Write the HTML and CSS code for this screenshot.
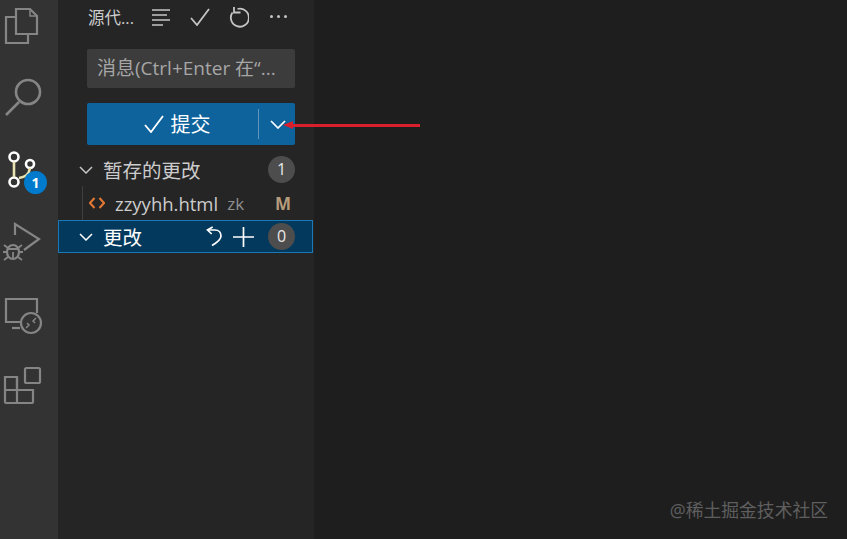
FILE: index.html
```html
<!DOCTYPE html>
<html lang="zh-CN">

<head>
    <meta charset="UTF-8">
    <title>源代码管理</title>
    <link rel="stylesheet" href="styles.css">
</head>

<body>
    <nav class="activity-bar">
        <div class="activity-item">
            <svg width="58" height="72" viewBox="0 0 58 72" fill="none" stroke="#858585" stroke-width="2.2">
                <path d="M16 19h14l7 7v18H16z" />
                <path d="M30 19v7h7" stroke-width="1.5" />
                <path d="M16 27H6v26h22v-9" />
            </svg>
        </div>
        <div class="activity-item">
            <svg width="58" height="72" viewBox="0 0 58 72" fill="none" stroke="#858585" stroke-width="2.6">
                <circle cx="28" cy="30" r="12" />
                <path d="M19 40L6 53" />
            </svg>
        </div>
        <div class="activity-item">
            <svg width="58" height="72" viewBox="0 0 58 72" fill="none" stroke="#fff" stroke-width="2.6">
                <circle cx="14" cy="23" r="4.500" />
                <circle cx="14" cy="48" r="4.500" />
                <circle cx="30" cy="30" r="4" />
                <path d="M14 28v15" stroke="#e8e3b0" />
                <path d="M19 44c6-1 10-3 11-10" stroke="#e8e3b0" />
            </svg>
            <span class="badge">1</span>
        </div>
        <div class="activity-item">
            <svg width="58" height="72" viewBox="0 0 58 72" fill="none" stroke="#858585" stroke-width="2.2">
                <path d="M15 29V18l24 15-15 11" />
                <ellipse cx="13" cy="46" rx="6" ry="7" />
                <path d="M8 43h10M13 46v7M4 39l4 3M22 39l-4 3M3 46h4M23 46h-4M4 54l4-3M22 54l-4-3" stroke-width="1.8" />
            </svg>
        </div>
        <div class="activity-item">
            <svg width="58" height="72" viewBox="0 0 58 72" fill="none" stroke="#858585" stroke-width="2.2">
                <path d="M21 44H6V21h31v14" />
                <path d="M12 50h8" />
                <circle cx="31" cy="45" r="10" />
                <path d="M26 50l3-3-2-2M36 40l-3 3 2 2" stroke-width="1.500" />
            </svg>
        </div>
        <div class="activity-item">
            <svg width="58" height="72" viewBox="0 0 58 72" fill="none" stroke="#858585" stroke-width="2.2">
                <rect x="25" y="18" width="15" height="15" rx="1.500" />
                <path d="M5 27h12v26H6a1 1 0 0 1-1-1z" />
                <path d="M5 40h28v12a1 1 0 0 1-1 1H17" />
                <path d="M17 27v13" />
            </svg>
        </div>
    </nav>

    <aside class="sidebar">
        <div class="sidebar-header">
            <span class="sidebar-title">源代...</span>
            <svg width="20" height="18" viewBox="0 0 20 18" fill="none" stroke="#c5c5c5" stroke-width="1.6">
                <path d="M1 2h18M1 7h15M1 12h18M1 17h11" />
            </svg>
            <svg width="20" height="18" viewBox="0 0 20 18" fill="none" stroke="#c5c5c5" stroke-width="1.8">
                <path d="M1 10l6 7L19 1" />
            </svg>
            <svg width="20" height="22" viewBox="0 0 20 22" fill="none" stroke="#c5c5c5" stroke-width="1.8">
                <path d="M8.500 3a9 9 0 1 1-5 3.500" />
                <path d="M5 1v5.500h6.500" />
            </svg>
            <span class="dots"><i></i><i></i><i></i></span>
        </div>

        <div class="commit-box">
            <div class="message-input">消息(Ctrl+Enter 在“...</div>
            <div class="commit-button">
                <div class="commit-main">
                    <svg width="20" height="18" viewBox="0 0 20 18" fill="none" stroke="#fff" stroke-width="1.8">
                        <path d="M1 10l6 7L19 1" />
                    </svg>
                    <span class="commit-label">提交</span>
                </div>
                <div class="commit-more">
                    <svg width="16" height="9" viewBox="0 0 16 9" fill="none" stroke="#fff" stroke-width="1.7">
                        <path d="M1 1l7 7 7-7" />
                    </svg>
                </div>
            </div>
        </div>

        <div class="tree-row group-row">
            <svg width="14" height="8" viewBox="0 0 14 8" fill="none" stroke="#c5c5c5" stroke-width="1.5">
                <path d="M1 1l6 6 6-6" />
            </svg>
            <span class="row-label">暂存的更改</span>
            <span class="count">1</span>
        </div>
        <div class="tree-row file-row">
            <svg width="16" height="12" viewBox="0 0 16 12" fill="none" stroke="#e37933" stroke-width="2">
                <path d="M5.500 1L1 6l4.500 5M10.500 1L15 6l-4.500 5" />
            </svg>
            <span class="file-name">zzyyhh.html</span>
            <span class="file-dir">zk</span>
            <span class="file-status">M</span>
        </div>
        <div class="tree-row group-row selected">
            <svg width="14" height="8" viewBox="0 0 14 8" fill="none" stroke="#fff" stroke-width="1.5">
                <path d="M1 1l6 6 6-6" />
            </svg>
            <span class="row-label">更改</span>
            <svg class="undo-icon" width="16" height="21" viewBox="0 0 16 21" fill="none" stroke="#fff" stroke-width="1.7">
                <path d="M6.700 1L1.500 4l4.200 4" />
                <path d="M1.500 4H9c4 0 6 3 6 6 0 3-3 6-9 9.500" />
            </svg>
            <svg class="plus-icon" width="21" height="20" viewBox="0 0 21 20" fill="none" stroke="#fff" stroke-width="1.7">
                <path d="M10.500 0v20M0 10h21" />
            </svg>
            <span class="count">0</span>
        </div>
    </aside>

    <main class="editor">
        <div class="arrow"></div>
        <div class="watermark">@稀土掘金技术社区</div>
    </main>
</body>

</html>
```

FILE: styles.css
```css
html,
body {
    height: 100%;
}

body {
    display: flex;
    margin: 0;
    overflow: hidden;
    background-color: #1e1e1e;
    font-family: "Open Sans", "Noto Sans CJK SC", sans-serif;
    color: #cccccc;
}

.activity-bar {
    width: 58px;
    flex-shrink: 0;
    background-color: #333333;
}

.activity-item {
    position: relative;
    height: 72px;
}

.activity-item:first-child {
    margin-top: -10px;
}

.activity-item svg {
    display: block;
}

.badge {
    position: absolute;
    left: 24px;
    top: 37px;
    width: 23px;
    height: 23px;
    border-radius: 50%;
    background-color: #007acc;
    color: white;
    font-size: 14px;
    font-weight: 700;
    line-height: 23px;
    text-align: center;
}

.sidebar {
    width: 256px;
    flex-shrink: 0;
    background-color: #252526;
}

.sidebar-header {
    display: flex;
    align-items: center;
    gap: 19px;
    height: 33px;
    padding-left: 30px;
}

.sidebar-title {
    width: 46px;
    margin-right: -2px;
    font-size: 16.5px;
    white-space: nowrap;
}

.dots {
    display: flex;
    gap: 4px;
    margin-left: 2px;
}

.dots i {
    width: 3px;
    height: 3px;
    border-radius: 50%;
    background-color: #c5c5c5;
}

.commit-box {
    padding: 16px 19px 8px 29px;
}

.message-input {
    height: 39px;
    margin-bottom: 15px;
    padding-left: 10px;
    border-radius: 2px;
    background-color: #3c3c3c;
    color: #a6a6a6;
    font-size: 19px;
    line-height: 39px;
    white-space: nowrap;
}

.commit-button {
    display: flex;
    height: 42px;
    border-radius: 2px;
    background-color: #0e639c;
    color: white;
}

.commit-main {
    display: flex;
    flex: 1;
    align-items: center;
    justify-content: center;
    gap: 7px;
    padding-left: 9px;
    font-size: 20px;
}

.commit-label {
    margin-top: -2px;
}

.commit-more {
    position: relative;
    display: flex;
    align-items: center;
    justify-content: center;
    box-sizing: border-box;
    width: 37px;
    padding-left: 3px;
}

.commit-more::before {
    content: "";
    position: absolute;
    left: 0;
    top: 6px;
    bottom: 6px;
    width: 1px;
    background-color: #5f97bd;
}

.tree-row {
    display: flex;
    align-items: center;
    box-sizing: border-box;
    padding-right: 19px;
}

.group-row {
    height: 33px;
    padding-left: 21px;
}

.row-label {
    flex: 1;
    margin-left: 10px;
    font-size: 19.5px;
}

.count {
    width: 27px;
    height: 27px;
    border-radius: 50%;
    background-color: #4d4d4d;
    color: #e8e8e8;
    font-size: 16px;
    line-height: 27px;
    text-align: center;
}

.file-row {
    position: relative;
    height: 34px;
    padding-left: 31px;
}

.file-row::before {
    content: "";
    position: absolute;
    left: 24px;
    top: 0;
    bottom: 0;
    width: 1px;
    background-color: #3f3f3f;
}

.file-name {
    margin-left: 10px;
    font-size: 18.5px;
}

.file-dir {
    flex: 1;
    margin-left: 9px;
    color: #8f8f8f;
    font-size: 17px;
}

.file-status {
    margin-right: 4px;
    color: #b69b7b;
    font-size: 17px;
    font-weight: 700;
}

.selected {
    width: 255px;
    border: 1px solid #1a78b5;
    background-color: #04395e;
    color: white;
    padding-right: 17px;
    padding-left: 20px;
}

.undo-icon {
    margin-right: 11px;
}

.plus-icon {
    margin-right: 14px;
}

.editor {
    position: relative;
    flex: 1;
}

.arrow {
    position: absolute;
    left: -21px;
    top: 124px;
    width: 127px;
    height: 3px;
    background-color: #d81f2b;
}

.arrow::before {
    content: "";
    position: absolute;
    left: -10px;
    top: -3px;
    border-top: 4.5px solid transparent;
    border-bottom: 4.5px solid transparent;
    border-right: 10px solid #d81f2b;
}

.watermark {
    position: absolute;
    right: 19px;
    bottom: 17px;
    color: #5f5f5f;
    font-size: 17.8px;
}
```
